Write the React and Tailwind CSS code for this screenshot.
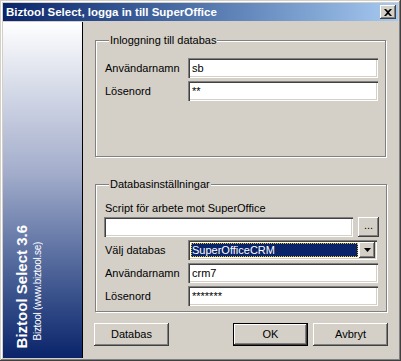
const raised =
  "shadow-[inset_-1px_-1px_#404040,inset_1px_1px_#ffffff,inset_-2px_-2px_#808080]";
const sunken =
  "shadow-[inset_1px_1px_#808080,inset_2px_2px_#404040,inset_-1px_-1px_#ffffff,inset_-2px_-2px_#d4d0c8]";

function Field({ value, className = "" }) {
  return (
    <div
      className={`flex h-[20px] items-center bg-white pl-[4px] text-black ${sunken} ${className}`}
    >
      {value}
    </div>
  );
}

function Row({ label, children }) {
  return (
    <div className="flex items-center">
      <span className="w-[84px] pl-[1px]">{label}</span>
      {children}
    </div>
  );
}

function Group({ title, className = "", children }) {
  return (
    <fieldset
      className={`ml-[12px] w-[291px] border border-[#808080] pl-[8px] pr-[7px] pt-[11px] shadow-[1px_1px_0_#ffffff,inset_1px_1px_0_#ffffff] ${className}`}
    >
      <legend className="ml-[5px] bg-[#d4d0c8] px-[1px] leading-[13px]">
        {title}
      </legend>
      {children}
    </fieldset>
  );
}

function Button({ children, isDefault }) {
  if (isDefault) {
    return (
      <div className="h-[23px] w-[75px] border border-black">
        <div
          className={`flex h-full w-full items-center justify-center bg-[#d4d0c8] ${raised}`}
        >
          {children}
        </div>
      </div>
    );
  }
  return (
    <div
      className={`flex h-[23px] w-[75px] items-center justify-center bg-[#d4d0c8] shadow-[inset_-1px_-1px_#404040,inset_1px_1px_#ffffff,inset_-2px_-2px_#808080,inset_2px_2px_#d4d0c8]`}
    >
      {children}
    </div>
  );
}

export default function App() {
  return (
    <div
      className="flex h-[361px] w-[401px] flex-col bg-[#d4d0c8] p-[3px] text-[11px] leading-[13px] text-black shadow-[inset_-1px_-1px_#404040,inset_1px_1px_#d4d0c8,inset_-2px_-2px_#808080,inset_2px_2px_#ffffff]"
      style={{ fontFamily: '"Liberation Sans", Arial, sans-serif' }}
    >
      {/* title bar */}
      <div className="flex h-[18px] items-center bg-gradient-to-r from-[#0a246a] to-[#a6caf0] pl-[3px] pr-[2px]">
        <span className="text-[11.5px] font-bold text-white">
          Biztool Select, logga in till SuperOffice
        </span>
        <div
          className={`ml-auto flex h-[14px] w-[16px] items-center justify-center bg-[#d4d0c8] ${raised}`}
        >
          <svg width="8" height="7" viewBox="0 0 8 7">
            <path
              d="M0 0h2l2 2 2-2h2L5 3.5 8 7H6L4 5 2 7H0l3-3.5z"
              fill="#000"
            />
          </svg>
        </div>
      </div>

      <div className="mt-[1px] flex flex-1">
        {/* side banner */}
        <div className="flex w-[80px] items-end border-r border-black bg-gradient-to-b from-[#ffffff] via-[#a3adcb] via-45% to-[#0a236a] pb-[10px] pl-[10px]">
          <div className="rotate-180 text-[15px] font-bold leading-[17px] text-white [writing-mode:vertical-rl]">
            Biztool Select 3.6
          </div>
          <div className="mb-[8px] ml-[2px] rotate-180 text-[10px] leading-[12px] tracking-[-0.3px] text-white [writing-mode:vertical-rl]">
            Biztool (www.biztool.se)
          </div>
        </div>

        {/* form */}
        <div className="flex flex-1 flex-col">
          <Group title="Inloggning till databas" className="mt-[12px] h-[123px]">
            <div className="flex flex-col gap-[3px]">
              <Row label="Användarnamn">
                <Field value="sb" className="w-[190px]" />
              </Row>
              <Row label="Lösenord">
                <Field value="**" className="w-[190px]" />
              </Row>
            </div>
          </Group>

          <Group title="Databasinställningar" className="mt-[21px] h-[134px]">
            <div className="pl-[1px]">Script för arbete mot SuperOffice</div>
            <div className="mt-[2px] flex flex-col gap-[3px]">
              <div className="flex items-center gap-[5px]">
                <Field value="" className="w-[249px]" />
                <div
                  className={`flex h-[20px] w-[21px] items-center justify-center bg-[#d4d0c8] pb-[3px] ${raised}`}
                >
                  ...
                </div>
              </div>
              <Row label="Välj databas">
                <div className={`flex h-[20px] w-[189px] bg-white p-[2px] ${sunken}`}>
                  <div className="flex flex-1 items-center bg-white p-[1px]">
                    <div className="flex h-full flex-1 items-center bg-[#0a246a] pl-[1px] text-white outline-1 outline-dotted outline-[#f0c000] -outline-offset-1">
                      SuperOfficeCRM
                    </div>
                  </div>
                  <div
                    className={`flex w-[16px] items-center justify-center bg-[#d4d0c8] ${raised}`}
                  >
                    <svg width="7" height="4" viewBox="0 0 7 4">
                      <path d="M0 0h7L3.5 4z" fill="#000" />
                    </svg>
                  </div>
                </div>
              </Row>
              <Row label="Användarnamn">
                <Field value="crm7" className="w-[190px]" />
              </Row>
              <Row label="Lösenord">
                <Field value="*******" className="w-[190px]" />
              </Row>
            </div>
          </Group>

          <div className="mt-[11px] flex pl-[11px] pr-[10px]">
            <Button>Databas</Button>
            <div className="ml-auto flex gap-[5px]">
              <Button isDefault>OK</Button>
              <Button>Avbryt</Button>
            </div>
          </div>
        </div>
      </div>
    </div>
  );
}
